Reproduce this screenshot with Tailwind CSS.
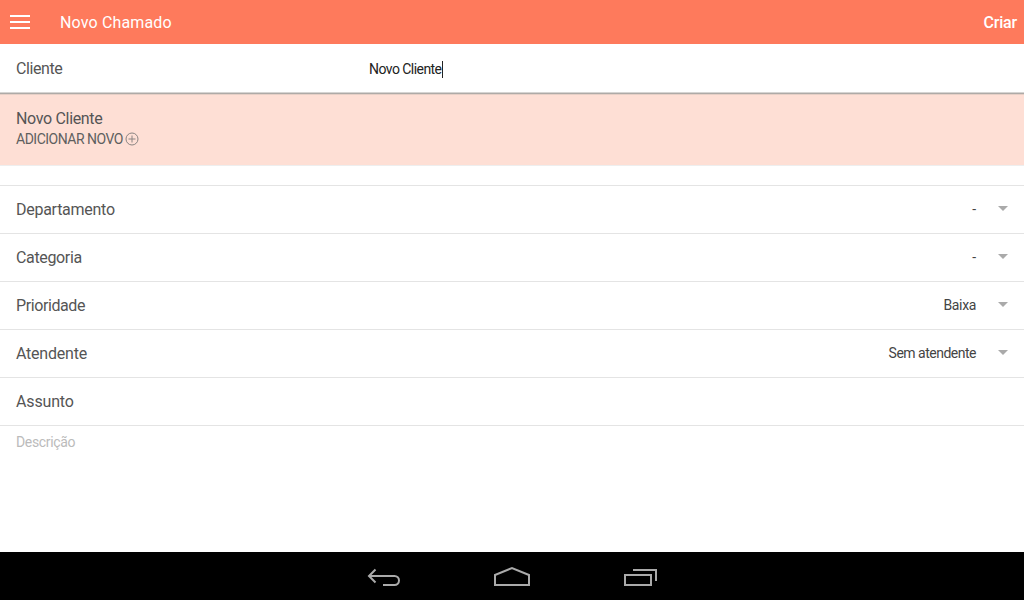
<!DOCTYPE html>
<html lang="pt-BR">
<head>
    <meta charset="UTF-8">
    <meta name="viewport" content="width=device-width, initial-scale=1.0">
    <title>Novo Chamado</title>
    <script src="https://cdn.jsdelivr.net/npm/@tailwindcss/browser@4"></script>
</head>
<body class="w-[1024px] h-[600px] overflow-hidden bg-white font-['Roboto',sans-serif] flex flex-col">
    <!-- Header -->
    <div class="h-[44px] shrink-0 bg-[#fe7a5c] flex items-center text-white">
        <svg class="ml-[10px] w-[20px] h-[16px]" viewBox="0 0 20 16" fill="#fff">
            <rect x="0" y="1" width="20" height="2"/>
            <rect x="0" y="7" width="20" height="2"/>
            <rect x="0" y="13" width="20" height="2"/>
        </svg>
        <span class="ml-[30px] pt-[2px] text-[16px] tracking-[0.15px]">Novo Chamado</span>
        <span class="ml-auto mr-[7px] pt-[2px] text-[16px] font-medium tracking-[-0.2px]">Criar</span>
    </div>

    <!-- Cliente -->
    <div class="h-[50px] shrink-0 flex items-center border-b border-[#aeaaa7] shadow-[inset_0_-1px_0_#d6d4d2] pl-[16px] pt-[1px] pb-[1px]">
        <span class="w-[353px] text-[16px] text-[#555] tracking-[-0.4px]">Cliente</span>
        <span class="pt-[2px] text-[14px] text-[#222] tracking-[-0.55px]">Novo Cliente</span>
        <span class="w-[1px] h-[17px] mt-[1px] bg-[#222]"></span>
    </div>

    <!-- Sugestao -->
    <div class="h-[72px] shrink-0 bg-[#fedfd5] border-b border-[#eee] shadow-[inset_0_1px_0_#e6cfc6] pl-[16px] pt-[15px]">
        <div class="text-[16px] leading-[20px] text-[#555] tracking-[-0.33px]">Novo Cliente</div>
        <div class="flex items-center text-[14px] leading-[20px] text-[#5f5f5f] tracking-[-0.5px]">
            ADICIONAR NOVO
            <svg class="ml-[2px] w-[14px] h-[14px]" viewBox="0 0 14 14" fill="none" stroke="#8a8482" stroke-width="1">
                <circle cx="7" cy="7" r="6"/>
                <path d="M7 3.500v7M3.500 7h7"/>
            </svg>
        </div>
    </div>

    <div class="h-[20px] shrink-0 border-b border-[#e4e4e4]"></div>

    <!-- Campos -->
    <div class="h-[48px] shrink-0 flex items-center border-b border-[#e4e4e4] pl-[16px] pr-[15px] text-[16px] text-[#555]">
        <span class="tracking-[-0.27px]">Departamento</span>
        <span class="ml-auto text-[14px] text-[#444]">-</span>
        <span class="ml-[22px] mr-[1px] mb-[2px] w-0 h-0 border-x-[5px] border-x-transparent border-t-[5px] border-t-[#aaa]"></span>
    </div>
    <div class="h-[48px] shrink-0 flex items-center border-b border-[#e4e4e4] pl-[16px] pr-[15px] text-[16px] text-[#555]">
        <span class="tracking-[-0.35px]">Categoria</span>
        <span class="ml-auto text-[14px] text-[#444]">-</span>
        <span class="ml-[22px] mr-[1px] mb-[2px] w-0 h-0 border-x-[5px] border-x-transparent border-t-[5px] border-t-[#aaa]"></span>
    </div>
    <div class="h-[48px] shrink-0 flex items-center border-b border-[#e4e4e4] pl-[16px] pr-[15px] text-[16px] text-[#555]">
        <span class="tracking-[-0.4px]">Prioridade</span>
        <span class="ml-auto text-[14px] text-[#444] tracking-[-0.35px]">Baixa</span>
        <span class="ml-[22px] mr-[1px] mb-[2px] w-0 h-0 border-x-[5px] border-x-transparent border-t-[5px] border-t-[#aaa]"></span>
    </div>
    <div class="h-[48px] shrink-0 flex items-center border-b border-[#e4e4e4] pl-[16px] pr-[15px] text-[16px] text-[#555]">
        <span class="tracking-[-0.22px]">Atendente</span>
        <span class="ml-auto text-[14px] text-[#444] tracking-[-0.5px]">Sem atendente</span>
        <span class="ml-[22px] mr-[1px] mb-[2px] w-0 h-0 border-x-[5px] border-x-transparent border-t-[5px] border-t-[#aaa]"></span>
    </div>
    <div class="h-[48px] shrink-0 flex items-center border-b border-[#e4e4e4] pl-[16px] text-[16px] text-[#555]">
        <span class="tracking-[-0.15px]">Assunto</span>
    </div>

    <!-- Descricao -->
    <div class="flex-1 pl-[16px] pt-[8px] text-[14px] leading-[16px] text-[#bbb] tracking-[-0.33px]">Descrição</div>

    <!-- Barra de navegacao -->
    <div class="h-[48px] shrink-0 bg-black flex items-center justify-center gap-[64px]">
        <svg class="w-[64px] h-[24px]" viewBox="0 0 64 24" fill="none" stroke="#aaa" stroke-width="2">
            <path d="M23.500 5.500L17 12l6.500 6.500M17 12h25.500a4.500 4.500 0 0 1 0 9H31"/>
        </svg>
        <svg class="w-[64px] h-[24px]" viewBox="0 0 64 24" fill="none" stroke="#aaa" stroke-width="2">
            <path d="M15 11L32 4l17 7v10H15z"/>
        </svg>
        <svg class="w-[64px] h-[24px]" viewBox="0 0 64 24" fill="none" stroke="#aaa" stroke-width="2">
            <path d="M17 11h26v10H17zM25 6h23v11"/>
        </svg>
    </div>
</body>
</html>
